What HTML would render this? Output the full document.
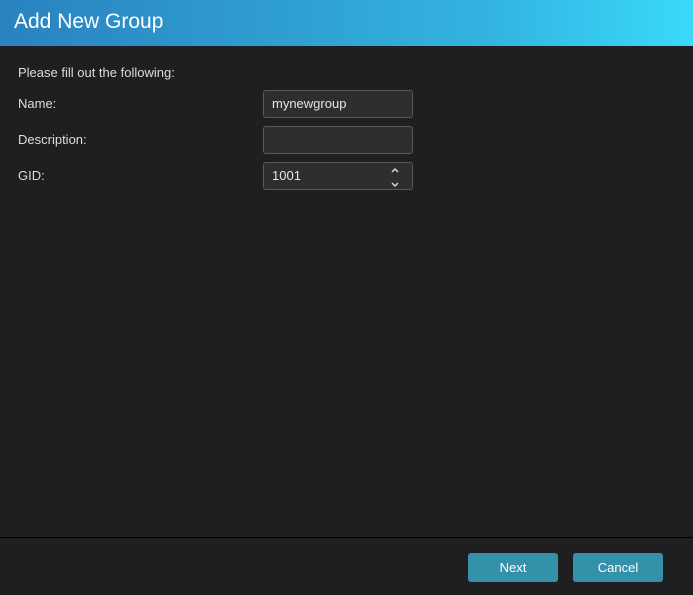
<!DOCTYPE html>
<html><head><style>
body{margin:0;width:693px;height:595px;background:#1f1f21;font-family:"Liberation Sans",sans-serif;position:relative;overflow:hidden}
.hd{position:absolute;left:0;top:0;width:693px;height:46px;background:linear-gradient(90deg,#2a82bf,#33b3e0 70%,#3ad9fa);}
.hd span{position:absolute;left:14px;top:10px;font-size:21px;color:#fff}
.t{position:absolute;left:18px;font-size:13px;color:#ddd}
.in{position:absolute;left:263px;width:148px;height:26px;background:#2e2e30;border:1px solid #58585a;border-radius:3px;color:#e6e6e6;font-size:13px;line-height:26px;box-sizing:content-box;text-indent:8px}
.sep{position:absolute;left:0;top:537px;width:693px;height:1px;background:#000}
.b{position:absolute;top:553px;width:90px;height:29px;background:#3391aa;border-radius:3px;color:#fff;font-size:13px;text-align:center;line-height:29px}
</style></head><body>
<div class="hd"><span>Add New Group</span></div>
<div class="t" style="top:65px">Please fill out the following:</div>
<div class="t" style="top:96px">Name:</div>
<div class="t" style="top:132px">Description:</div>
<div class="t" style="top:168px">GID:</div>
<div class="in" style="top:90px">mynewgroup</div>
<div class="in" style="top:126px"></div>
<div class="in" style="top:162px">1001
<svg style="position:absolute;left:126px;top:2px" width="10" height="24" viewBox="0 0 10 24"><path d="M2 7L5 4L8 7M2 18L5 21L8 18" stroke="#ddd" stroke-width="1.4" fill="none"/></svg></div>
<div class="sep"></div>
<div class="b" style="left:468px">Next</div>
<div class="b" style="left:573px">Cancel</div>
</body></html>
